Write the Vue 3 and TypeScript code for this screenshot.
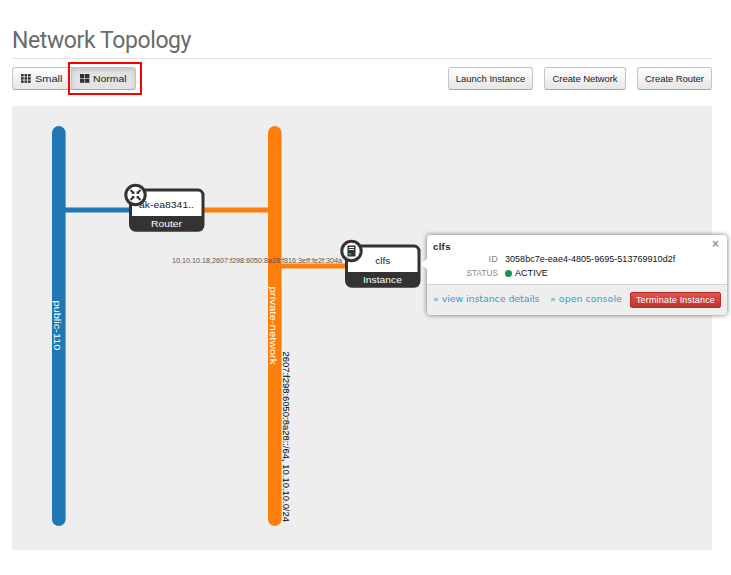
<script setup lang="ts">
interface Network {
  name: string
  x: number
  color: string
  labelY: number
  labelLength: number
}

interface Device {
  name: string
  kind: string
  x: number
  y: number
  nameX: number
  nameLength: number
  kindLength: number
}

const networks: Network[] = [
  { name: 'public-110', x: 52, color: '#1f77b4', labelY: 300.5, labelLength: 50 },
  { name: 'private-network', x: 268, color: '#ff7f0e', labelY: 286.5, labelLength: 78 },
]

const devices: Device[] = [
  { name: 'ak-ea8341..', kind: 'Router', x: 129, y: 188, nameX: 139, nameLength: 55, kindLength: 31 },
  { name: 'clfs', kind: 'Instance', x: 345, y: 244, nameX: 375.3, nameLength: 15, kindLength: 39 },
]

const actions: string[] = ['Launch Instance', 'Create Network', 'Create Router']
</script>

<template>
  <main class="page">
    <header class="page-header"><h1>Network Topology</h1></header>

    <div class="toolbar">
      <div class="modes">
        <button class="btn mode small" type="button">
          <svg width="10" height="9" viewBox="0 0 10 9" fill="#333">
            <template v-for="r in 3" :key="r">
              <rect v-for="c in 3" :key="c" :x="(c - 1) * 3.5" :y="(r - 1) * 3.2" width="2.7" height="2.5" />
            </template>
          </svg>
          <svg class="mode-text" width="28" height="13"><text x="0" y="9.500" textLength="27.500" lengthAdjust="spacingAndGlyphs">Small</text></svg>
        </button>
        <button class="btn mode normal" type="button">
          <svg width="10" height="9" viewBox="0 0 10 9" fill="#333">
            <template v-for="r in 2" :key="r">
              <rect v-for="c in 2" :key="c" :x="(c - 1) * 5" :y="(r - 1) * 4.7" width="4.4" height="4.1" />
            </template>
          </svg>
          <svg class="mode-text" width="35" height="13"><text x="0" y="9.500" textLength="33.500" lengthAdjust="spacingAndGlyphs">Normal</text></svg>
        </button>
        <div class="highlight"></div>
      </div>
      <div class="actions">
        <button v-for="(action, i) in actions" :key="action" class="btn" :class="'action-' + i" type="button">{{ action }}</button>
      </div>
    </div>

    <section class="canvas">
      <svg class="topology" width="700" height="444" viewBox="12 106 700 444">
        <rect v-for="n in networks" :key="n.name" :x="n.x" y="126" width="13.6" height="400" rx="6.8" :fill="n.color" />
        <rect x="65" y="207.5" width="66" height="5" fill="#1f77b4" />
        <rect x="203" y="207.5" width="66" height="5" fill="#ff7f0e" />
        <rect x="281" y="263.5" width="66" height="5" fill="#ff7f0e" />
        <text
          v-for="n in networks" :key="n.name" class="net-label"
          :transform="`translate(${n.x + 1.5} ${n.labelY}) rotate(90)`" :textLength="n.labelLength"
          lengthAdjust="spacingAndGlyphs"
        >{{ n.name }}</text>
        <text class="cidr" transform="translate(283 351.500) rotate(90)" textLength="170.500" lengthAdjust="spacingAndGlyphs">2607:f298:6050:8a28::/64, 10.10.10.0/24</text>
        <text class="ips" x="172" y="263" textLength="170" lengthAdjust="spacingAndGlyphs">10.10.10.18,2607:f298:6050:8a28:f816:3eff:fe2f:304a</text>

        <g v-for="d in devices" :key="d.kind">
          <rect :x="d.x + 1.5" :y="d.y + 2" width="72.500" height="40" rx="5" fill="#fff" stroke="#333" stroke-width="3" />
          <path :d="`M${d.x + 1} ${d.y + 28}h74v9.500q0 6-6 6h-62q-6 0-6-6z`" fill="#333" />
          <text class="device-name" :x="d.nameX" :y="d.y + 20" :textLength="d.nameLength" lengthAdjust="spacingAndGlyphs">{{ d.name }}</text>
          <text class="device-kind" :x="d.x + 37.500" :y="d.y + 39" :textLength="d.kindLength" lengthAdjust="spacingAndGlyphs">{{ d.kind }}</text>
          <g :transform="`translate(${d.x + 6.500} ${d.y + 7})`">
            <circle r="9.700" fill="#fff" stroke="#333" stroke-width="3" />
            <g v-if="d.kind === 'Router'">
              <g v-for="a in 4" :key="a" :transform="`rotate(${a * 90})`">
                <path d="M5-5L2-2" fill="none" stroke="#333" stroke-width="1.900" />
                <path d="M1.100-4v2.900h2.900z" fill="#333" />
              </g>
            </g>
            <g v-else>
              <rect x="-4" y="-5.500" width="8" height="11" fill="#333" />
              <path d="M-2.500-3.500h5M-2.500-1.500h5" stroke="#fff" stroke-width="1" />
              <rect x="-2.800" y="2.200" width="2.400" height="2" fill="#39a935" />
            </g>
          </g>
        </g>
      </svg>

      <aside class="balloon">
        <div class="details">
          <span class="close">×</span>
          <h2>clfs</h2>
          <dl>
            <dt class="id-key">ID</dt>
            <dd class="id-value">3058bc7e-eae4-4805-9695-513769910d2f</dd>
            <dt class="status-key">STATUS</dt>
            <dd class="status-value"><i class="dot"></i>ACTIVE</dd>
          </dl>
        </div>
        <footer>
          <a class="view">» view instance details</a>
          <a class="console">» open console</a>
          <button class="terminate" type="button">Terminate Instance</button>
        </footer>
      </aside>
    </section>
  </main>
</template>

<style>
body { margin: 0; background: #fff; }
</style>

<style scoped>
* { box-sizing: border-box; }
.page {
  width: 731px;
  height: 575px;
  padding: 0 19px 0 12px;
  font-family: "Liberation Sans", Arial, sans-serif;
  font-size: 10px;
  color: #333;
  overflow: hidden;
}
.page-header { height: 59px; padding-top: 26px; border-bottom: 1px solid #e2e2e2; }
h1 {
  margin: 0;
  font: 400 23px/30px Roboto, sans-serif;
  letter-spacing: -0.4px;
  color: #6a6a6a;
  white-space: nowrap;
}
.toolbar { display: flex; justify-content: space-between; height: 47px; padding-top: 8px; }
.modes { position: relative; display: flex; height: 23px; }
.btn {
  display: flex;
  align-items: center;
  justify-content: center;
  height: 23px;
  padding: 0;
  border: 1px solid #c4c4c4;
  border-bottom-color: #aaa;
  border-radius: 3px;
  background: linear-gradient(#fff, #e6e6e6);
  font: 9.5px/12px "Liberation Sans", Arial, sans-serif;
  color: #222;
  white-space: nowrap;
}
.mode { gap: 4px; justify-content: flex-start; }
.mode-text { overflow: visible; font-size: 9.5px; fill: #222; }
.mode.small { width: 59px; padding-left: 8px; border-right: 0; border-radius: 3px 0 0 3px; }
.mode.normal {
  width: 65px;
  padding-left: 8px;
  gap: 3px;
  border-radius: 0 3px 3px 0;
  background: #e3e3e3;
  box-shadow: inset 0 2px 4px rgba(0, 0, 0, 0.15);
}
.highlight { position: absolute; left: 56px; top: -5px; width: 74px; height: 33px; border: 2px solid #f00; }
.actions { display: flex; gap: 11px; }
.action-0 { width: 85px; letter-spacing: 0; }
.action-1 { width: 82px; letter-spacing: -0.08px; }
.action-2 { width: 75px; letter-spacing: -0.06px; }
.canvas { position: relative; width: 700px; height: 444px; background: #eee; }
.topology { display: block; }
.net-label { font-size: 9.5px; fill: #fff; }
.cidr { font-size: 9px; fill: #000; }
.ips { font-size: 7px; fill: #555; }
.device-name { font-size: 9.5px; fill: #222; }
.device-kind { font-size: 9.5px; fill: #fff; text-anchor: middle; }
.balloon {
  position: absolute;
  left: 415px;
  top: 129px;
  width: 300px;
  height: 80px;
  border-radius: 4px;
  background: #fff;
  box-shadow: 0 0 5px rgba(0, 0, 0, 0.55);
}
.balloon::before {
  content: "";
  position: absolute;
  left: -6px;
  top: 24px;
  border: solid transparent;
  border-width: 5px 6px 5px 0;
  border-right-color: #fff;
}
.details { position: relative; height: 49px; padding: 6px 7px 0 6px; }
h2 { margin: 0; font-size: 9.5px; line-height: 12px; letter-spacing: 0.35px; color: #222; }
dl { display: grid; grid-template-columns: 65px 1fr; column-gap: 7px; margin: 0; line-height: 13.5px; white-space: nowrap; }
dt { text-align: right; color: #888; font-size: 9px; }
.id-key { letter-spacing: 0.3px; }
.status-key { transform: scaleX(0.92); transform-origin: right; }
dd { margin: 0; color: #111; }
.id-value { font-size: 9px; letter-spacing: 0.03px; }
.status-value { display: flex; align-items: center; font-size: 9px; letter-spacing: 0.05px; }
.dot { width: 7px; height: 7px; margin-right: 3px; border-radius: 50%; background: #109858; }
.close { position: absolute; right: 8px; top: 3px; font-weight: 700; font-size: 12px; line-height: 12px; color: #999; }
footer {
  display: flex;
  align-items: center;
  height: 31px;
  padding: 0 6px 0 6px;
  border-top: 1px solid #d2d2d2;
  border-radius: 0 0 4px 4px;
  background: #eee;
  white-space: nowrap;
}
footer a { padding-bottom: 2px; color: #2f9fd8; font: 9.500px/12px "DejaVu Sans", sans-serif; }
.view { width: 117px; letter-spacing: -0.1px; }
.console { letter-spacing: 0; }
.terminate {
  width: 91px;
  height: 16px;
  margin-left: auto;
  padding: 0;
  border: 1px solid #b52b27;
  border-radius: 2px;
  background: linear-gradient(#e0524d, #bd362f);
  color: #fff;
  font: 9px/12px "Liberation Sans", Arial, sans-serif;
  letter-spacing: 0.17px;
}
</style>
